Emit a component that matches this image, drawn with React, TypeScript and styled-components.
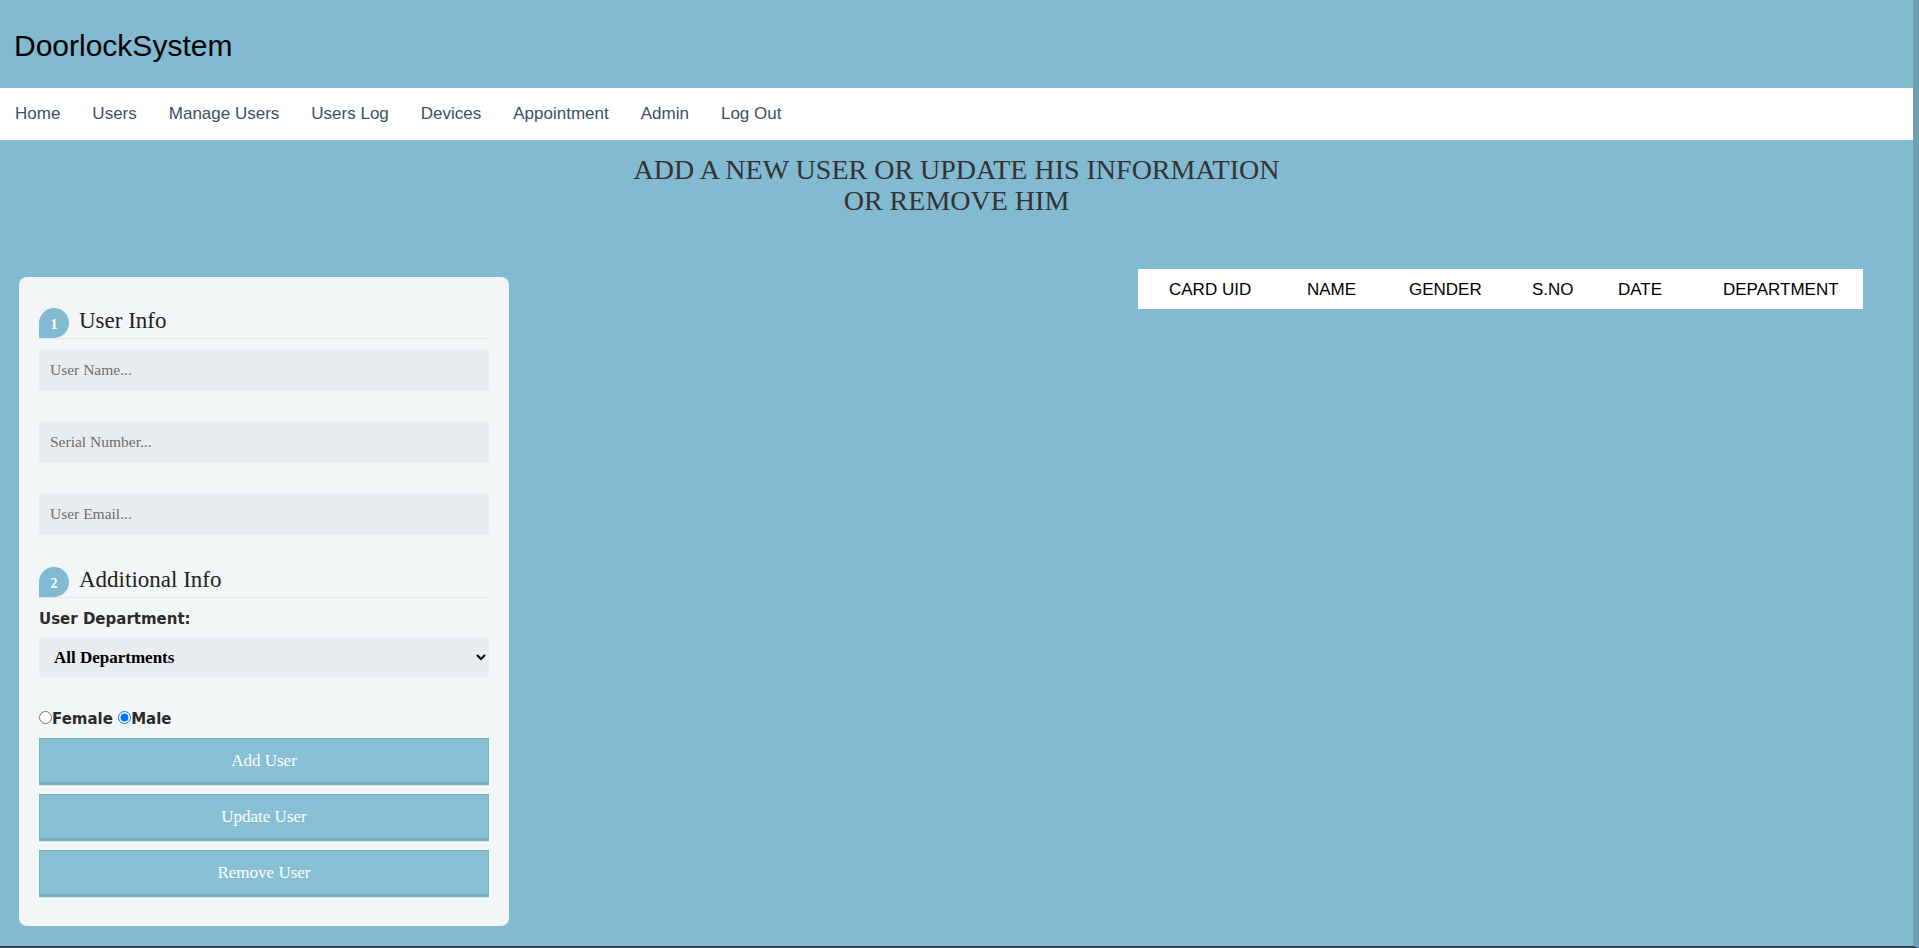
import React from "react";
import styled, { createGlobalStyle } from "styled-components";

const GlobalStyle = createGlobalStyle`
  html, body { margin: 0; padding: 0; }
  body { background: #81bad1; font-family: "Liberation Serif", serif; }
  #root {
    min-height: 100vh;
    box-sizing: border-box;
    border-right: 6px solid #6f9fb3;
    border-bottom: 2px solid #3a3f44;
  }
`;

const Page = styled.div`
  background: #81bad1;
  min-height: 100%;
`;

const Header = styled.header`
  height: 88px;
  display: flex;
  align-items: center;
  padding-left: 14px;
  box-sizing: border-box;
`;

const Brand = styled.div`
  font: 400 30px/1 "Liberation Sans", Arial, sans-serif;
  color: #000;
  margin-top: 4px;
`;

const Nav = styled.nav`
  height: 52px;
  background: #fff;
  display: flex;
  align-items: center;
  gap: 32px;
  padding-left: 15px;
`;

const NavLink = styled.a`
  font: 400 17px "Liberation Sans", Arial, sans-serif;
  color: #3a5068;
  text-decoration: none;
  cursor: pointer;
`;

const Title = styled.h1`
  margin: 14px 0 0;
  text-align: center;
  font: 400 28px/31px "Liberation Serif", "Times New Roman", serif;
  color: #333;
`;

const Main = styled.main`
  display: flex;
  justify-content: space-between;
  align-items: flex-start;
  margin-top: 53px;
  padding: 0 50px 0 19px;
`;

const Card = styled.section`
  width: 490px;
  box-sizing: border-box;
  margin-top: 8px;
  padding: 31px 20px 29px;
  background: #f3f6f7;
  border-radius: 8px;
`;

const SectionHead = styled.div<{ $top?: number }>`
  display: flex;
  align-items: flex-start;
  gap: 10px;
  border-bottom: 1px solid #e0e6e9;
  margin-top: ${(p) => p.$top ?? 0}px;
`;

const Badge = styled.span`
  width: 30px;
  height: 30px;
  border-radius: 15px 15px 15px 0;
  background: #81bad1;
  color: #fff;
  font: 700 14px/33px "Liberation Serif", Georgia, serif;
  text-align: center;
`;

const SectionTitle = styled.span`
  font: 400 23px/25px "Liberation Serif", Georgia, serif;
  color: #222;
`;

const Fields = styled.div`
  display: flex;
  flex-direction: column;
  gap: 30px;
  margin-top: 10px;
`;

const Input = styled.input`
  display: block;
  width: 100%;
  height: 42px;
  box-sizing: border-box;
  border: none;
  border-radius: 4px;
  background: #e8ecee;
  padding: 0 11px;
  font: 400 15.5px "Liberation Serif", Georgia, serif;
  color: #333;
  outline: none;
  &::placeholder { color: #6e6e6e; }
`;

const Label = styled.label`
  display: block;
  margin-top: 12px;
  font: 700 15px "DejaVu Sans", Verdana, sans-serif;
  color: #2b2b2b;
`;

const Select = styled.select`
  display: block;
  width: 100%;
  height: 40px;
  margin-top: 9px;
  box-sizing: border-box;
  border: none;
  border-radius: 4px;
  background: #e8ecee;
  padding: 0 8px 0 11px;
  font: 700 17px "Liberation Serif", Georgia, serif;
  color: #000;
  outline: none;
`;

const RadioRow = styled.div`
  margin-top: 33px;
  font: 700 15px "DejaVu Sans", Verdana, sans-serif;
  color: #2b2b2b;
`;

const Radio = styled.input`
  margin: 0;
`;

const Buttons = styled.div`
  display: flex;
  flex-direction: column;
  gap: 9px;
  margin-top: 10px;
`;

const Button = styled.button`
  height: 47px;
  width: 100%;
  box-sizing: border-box;
  background: #87bfd4;
  border: 1px solid #7fb4c8;
  border-bottom: 3px solid #78acc0;
  box-shadow: 0 1px 0 #d9e7ec;
  color: #fff;
  font: 400 17px "Liberation Serif", Georgia, serif;
  cursor: pointer;
`;

const Table = styled.table`
  width: 725px;
  border-collapse: collapse;
  table-layout: fixed;
  background: #fff;
`;

const Th = styled.th<{ $w: number; $pl?: number }>`
  width: ${(p) => p.$w}px;
  height: 40px;
  padding: 1px 0 0 ${(p) => p.$pl ?? 0}px;
  box-sizing: border-box;
  text-align: left;
  font: 400 17px "Liberation Sans", Arial, sans-serif;
  color: #000;
`;

const navItems = ["Home", "Users", "Manage Users", "Users Log", "Devices", "Appointment", "Admin", "Log Out"];

const columns: { label: string; w: number; pl?: number }[] = [
  { label: "CARD UID", w: 169, pl: 31 },
  { label: "NAME", w: 102 },
  { label: "GENDER", w: 123 },
  { label: "S.NO", w: 86 },
  { label: "DATE", w: 105 },
  { label: "DEPARTMENT", w: 140 },
];

export default function App() {
  return (
    <Page>
      <GlobalStyle />
      <Header>
        <Brand>DoorlockSystem</Brand>
      </Header>
      <Nav>
        {navItems.map((n) => (
          <NavLink key={n}>{n}</NavLink>
        ))}
      </Nav>
      <Title>
        ADD A NEW USER OR UPDATE HIS INFORMATION
        <br />
        OR REMOVE HIM
      </Title>
      <Main>
        <Card>
          <SectionHead>
            <Badge>1</Badge>
            <SectionTitle>User Info</SectionTitle>
          </SectionHead>
          <Fields>
            <Input placeholder="User Name..." />
            <Input placeholder="Serial Number..." />
            <Input placeholder="User Email..." />
          </Fields>
          <SectionHead $top={32}>
            <Badge>2</Badge>
            <SectionTitle>Additional Info</SectionTitle>
          </SectionHead>
          <Label>User Department:</Label>
          <Select defaultValue="all">
            <option value="all">All Departments</option>
          </Select>
          <RadioRow>
            <Radio type="radio" name="gender" value="female" />Female{" "}
            <Radio type="radio" name="gender" value="male" defaultChecked />Male
          </RadioRow>
          <Buttons>
            <Button>Add User</Button>
            <Button>Update User</Button>
            <Button>Remove User</Button>
          </Buttons>
        </Card>
        <Table>
          <thead>
            <tr>
              {columns.map((c) => (
                <Th key={c.label} $w={c.w} $pl={c.pl}>
                  {c.label}
                </Th>
              ))}
            </tr>
          </thead>
          <tbody />
        </Table>
      </Main>
    </Page>
  );
}
